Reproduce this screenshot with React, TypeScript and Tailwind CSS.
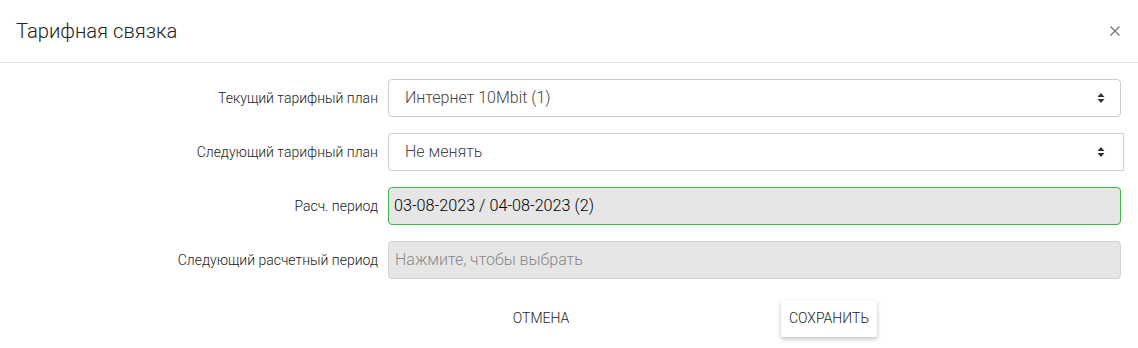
import React from "react";

const Arrows = () => (
  <svg width="8" height="12" viewBox="0 0 8 12" className="shrink-0">
    <path d="M4 1 L7.5 5 L0.5 5 Z" fill="#333" />
    <path d="M4 11 L7.5 7 L0.5 7 Z" fill="#333" />
  </svg>
);

export default function App() {
  const font = { fontFamily: "Roboto, 'Noto Sans', sans-serif" };
  return (
    <div className="w-[1138px] h-[348px] bg-white overflow-hidden font-light" style={font}>
      <div className="h-[63px] flex items-center justify-between pl-4 pr-[16px] border-b border-[#e5e5e5]">
        <div className="text-[20.2px] text-[#222]">Тарифная связка</div>
        <svg width="12" height="12" viewBox="0 0 12 12" className="mr-[1px]">
          <path d="M1.5 1.5 L10.5 10.5 M10.5 1.5 L1.5 10.5" stroke="#777" strokeWidth="1.4" />
        </svg>
      </div>
      <div className="pt-[16px] flex flex-col gap-[16px]">
        <div className="flex items-center h-[38px]">
          <div className="w-[378px] text-right text-[14px] text-[#222]">Текущий тарифный план</div>
          <div className="ml-[10px] w-[733px] h-[38px] border border-[#ccc] rounded-[4px] flex items-center justify-between pl-[16px] pr-[15px] text-[16px] text-[#444]">
            <span>Интернет 10Mbit (1)</span>
            <Arrows />
          </div>
        </div>
        <div className="flex items-center h-[38px]">
          <div className="w-[378px] text-right text-[14px] text-[#222]">Следующий тарифный план</div>
          <div className="ml-[10px] w-[736px] h-[38px] border border-[#ccc] rounded-l-[4px] flex items-center justify-between pl-[16px] pr-[18px] text-[16px] text-[#444]">
            <span>Не менять</span>
            <Arrows />
          </div>
        </div>
        <div className="flex items-center h-[38px]">
          <div className="w-[378px] text-right text-[14px] text-[#222]">Расч. период</div>
          <div className="ml-[10px] w-[733px] h-[38px] border border-[#3cb54a] rounded-[4px] bg-[#e6e6e6] flex items-center pl-[5px] text-[16.2px] text-[#000]">
            03-08-2023 / 04-08-2023 (2)
          </div>
        </div>
        <div className="flex items-center h-[38px]">
          <div className="w-[378px] text-right text-[14px] text-[#222]">Следующий расчетный период</div>
          <div className="ml-[10px] w-[733px] h-[38px] border border-[#d2d2d2] rounded-[4px] bg-[#e6e6e6] flex items-center pl-[6px] text-[16px] text-[#888]">
            Нажмите, чтобы выбрать
          </div>
        </div>
      </div>
      <div className="flex items-center mt-[21px] pl-[505px]">
        <button className="h-[37px] w-[72px] text-[14px] text-[#222] uppercase flex items-center justify-center">Отмена</button>
        <button className="ml-[204px] h-[37px] w-[96px] text-[14px] text-[#222] bg-white rounded-[2px] shadow-[0_2px_4px_rgba(0,0,0,0.25)] flex items-center justify-center">
          СОХРАНИТЬ
        </button>
      </div>
    </div>
  );
}
